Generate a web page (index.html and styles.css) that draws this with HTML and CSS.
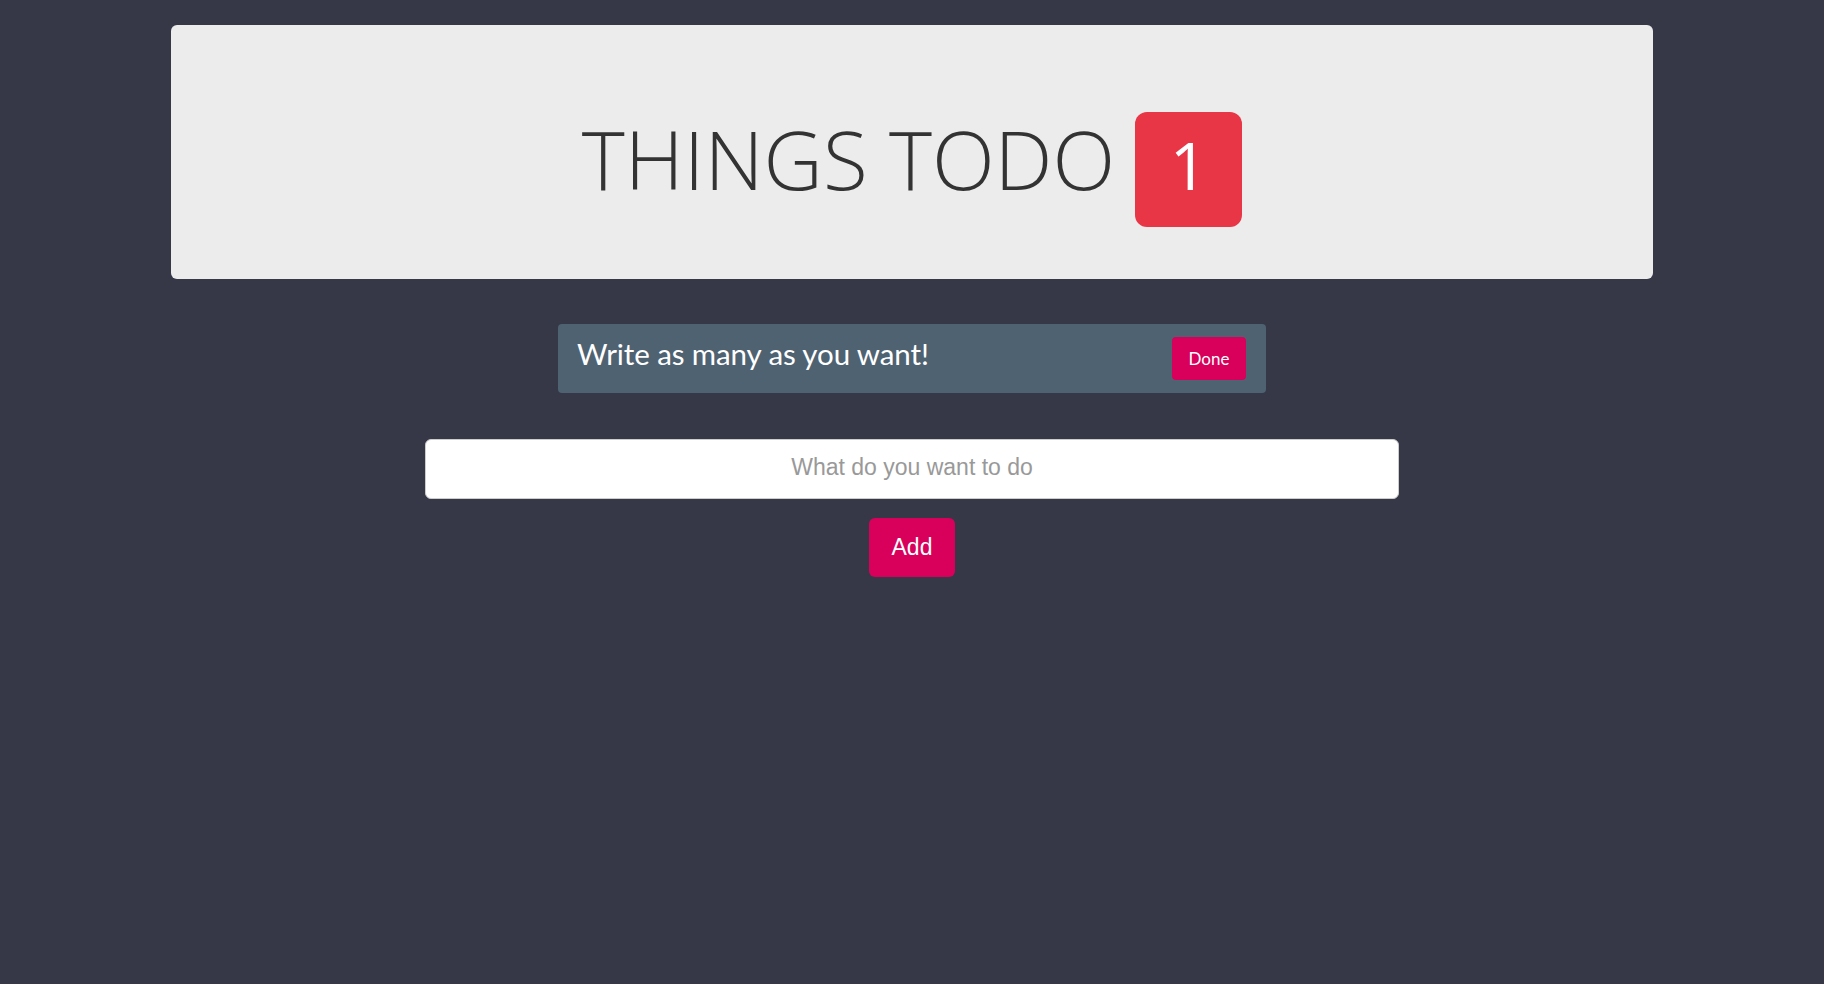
FILE: index.html
```html
<!DOCTYPE html>
<html lang="en">
<head>
<meta charset="utf-8">
<title>Things Todo</title>
<link rel="stylesheet" href="styles.css">
</head>
<body>
<main class="page">
  <header class="jumbotron">
    <h1 class="title"><span class="title-text">THINGS TODO</span><span class="badge">1</span></h1>
  </header>
  <section class="todo-list">
    <div class="todo-item">
      <span class="todo-text">Write as many as you want!</span>
      <button class="btn btn-done" type="button">Done</button>
    </div>
  </section>
  <form class="add-form">
    <input class="todo-input" type="text" placeholder="What do you want to do">
    <button class="btn btn-add" type="button">Add</button>
  </form>
</main>
</body>
</html>
```

FILE: styles.css
```css
* { box-sizing: border-box; }

html, body {
  margin: 0;
  padding: 0;
  background: #363848;
  height: 100%;
}

body {
  font-family: "Open Sans", "Liberation Sans", sans-serif;
}

.page {
  display: flex;
  flex-direction: column;
  align-items: center;
  padding-top: 25px;
}

.jumbotron {
  width: 1482px;
  height: 254px;
  background: #ececec;
  border-radius: 6px;
  padding-top: 77px;
}

.title {
  margin: 0;
  display: flex;
  justify-content: center;
  align-items: baseline;
  gap: 20px;
  font-family: "Open Sans", sans-serif;
  font-weight: 300;
  font-size: 82px;
  color: #333333;
}

.title-text {
  line-height: normal;
}

.badge {
  display: inline-block;
  width: 107px;
  text-align: center;
  font-size: 66px;
  font-weight: 400;
  line-height: 1;
  padding: 19px 0 30px;
  background: #e83646;
  color: #ffffff;
  border-radius: 12px;
}

.todo-list {
  margin-top: 45px;
}

.todo-item {
  width: 708px;
  height: 69px;
  background: #4f6272;
  border-radius: 4px;
  display: flex;
  align-items: center;
  justify-content: space-between;
  padding: 0 20px 0 19px;
}

.todo-text {
  font-family: Lato, "Open Sans", sans-serif;
  font-size: 29.5px;
  letter-spacing: -0.1px;
  color: #ffffff;
  margin-top: -11px;
}

.btn {
  border: none;
  color: #ffffff;
  background: #d8005a;
  cursor: pointer;
}

.btn-done {
  width: 74px;
  height: 43px;
  border-radius: 4px;
  font-family: Lato, "Open Sans", sans-serif;
  font-size: 17px;
  padding: 0;
}

.add-form {
  margin-top: 46px;
  display: flex;
  flex-direction: column;
  align-items: center;
  gap: 19px;
}

.todo-input {
  width: 974px;
  height: 60px;
  border: 1px solid #cccccc;
  border-radius: 6px;
  background: #ffffff;
  text-align: center;
  font-family: "Liberation Sans", Arial, sans-serif;
  font-size: 23px;
  color: #555555;
  outline: none;
  padding: 0 12px 4px;
}

.todo-input::placeholder {
  color: #999999;
}

.btn-add {
  width: 86px;
  height: 59px;
  border-radius: 6px;
  font-family: "Liberation Sans", Arial, sans-serif;
  font-size: 23px;
  padding: 0;
}
```
